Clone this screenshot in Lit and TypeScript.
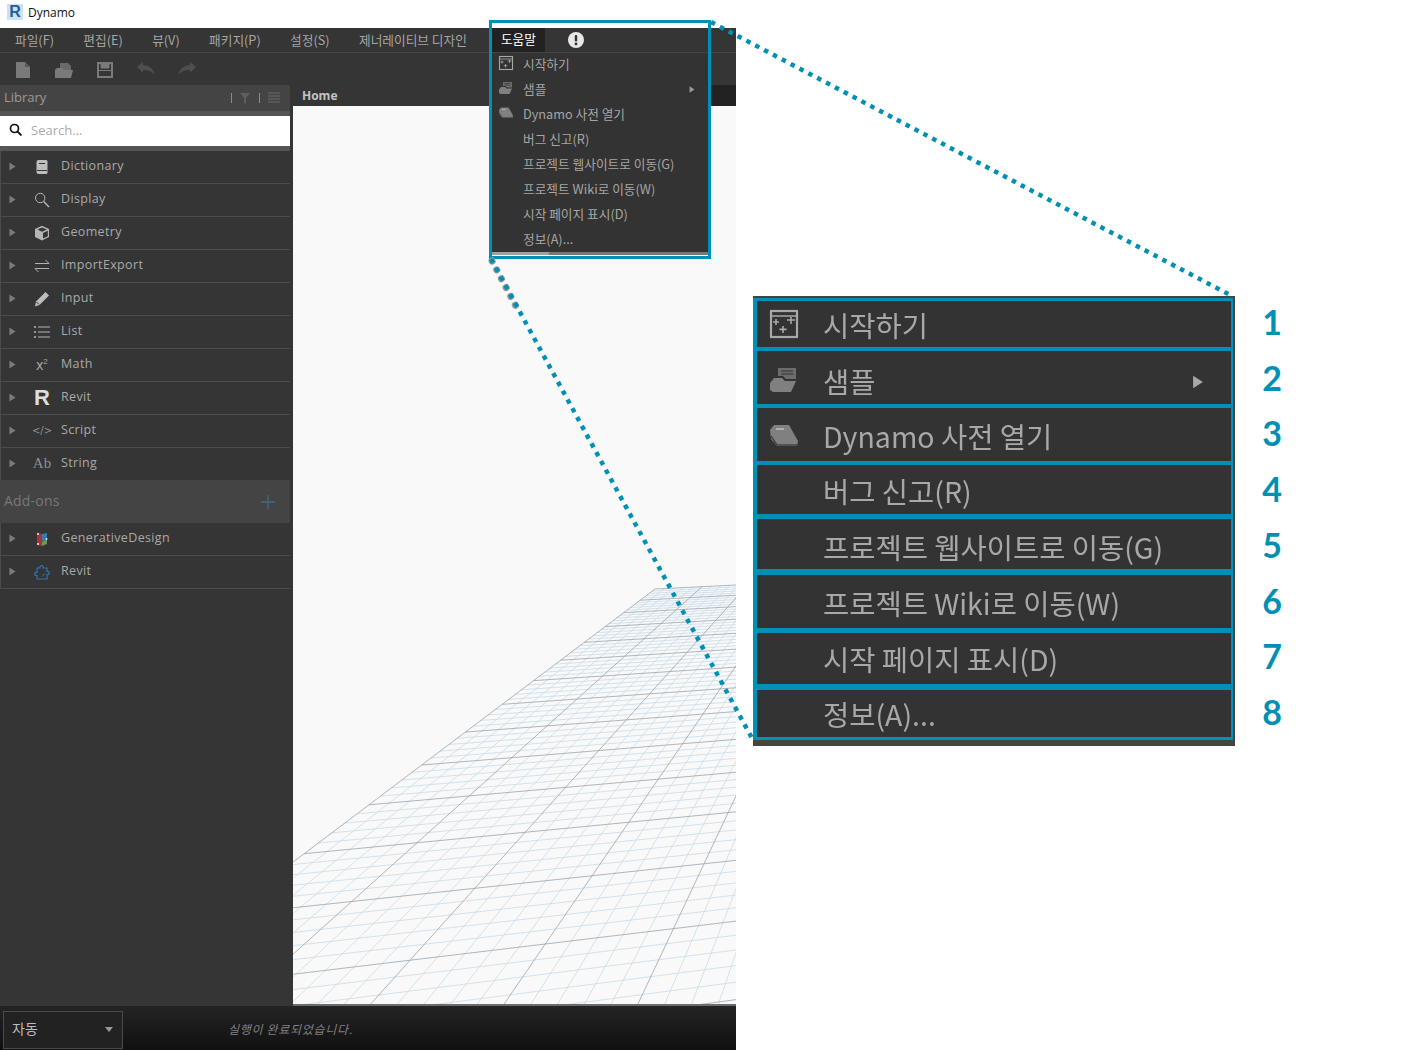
import { LitElement, html, css, svg, unsafeCSS } from 'lit';
import { customElement } from 'lit/decorators.js';

const TEAL = unsafeCSS('#0090b5');

const kr = ['시작하기', '샘플', 'Dynamo 사전 열기', '버그 신고(R)', '프로젝트 웹사이트로 이동(G)', '프로젝트 Wiki로 이동(W)', '시작 페이지 표시(D)', '정보(A)...'];

// callout rows: inner height, bottom rule, text nudge, read off the reference
const calloutRows = [
  [46, 4, 0], [53, 4, 5], [53, 4, 2], [49, 5, 2], [50, 6, 4], [53, 5, 2], [51, 6, 0], [47, 3, 0]
];

const startIcon = svg`<rect x="1.5" y="1.5" width="13" height="13" fill="none" stroke="currentColor" stroke-width="1.1"/><path d="M1.5 4h13M2.500 7h3M4 5.500v3M9.500 6h4M11.500 4.500v3.500M7.500 9v3.500M5.700 10.700h3.600" fill="none" stroke="currentColor" stroke-width=".8"/>`;
const sampleIcon = svg`<path d="M5 2h9v5.500H9L7.500 6H5z" fill="currentColor" opacity=".75"/><path d="M6.500 3.500h6M6.500 5h6" stroke="#333" stroke-width=".6"/><path d="M1 9.500 3 7h4l1.500 1.500H14L11.500 14H2.500L1 13z" fill="currentColor"/>`;
const bookIcon = svg`<path d="M1 5 3 2.500h7.500L15 10.500 14.500 13H4.500L1.500 9.500z" fill="currentColor"/><path d="M4 4.500h4" stroke="#bbb" stroke-width=".8"/><path d="M1.500 8 4.500 12.500H14.500" stroke="#444" stroke-width=".7" fill="none"/>`;
const menuIcons = [startIcon, sampleIcon, bookIcon];

const arrowRight = html`<svg class="tri" viewBox="0 0 8 10"><path d="M.5.5 7.500 5 .5 9.500z" fill="currentColor"/></svg>`;

const libIcons: Record<string, unknown> = {
  Dictionary: html`<svg class="li" viewBox="0 0 16 16"><path d="M2.500 3q0-2 2-2h7.500q1.500 0 1.500 1.500v11q0 1.500-1.500 1.500H4.500q-2 0-2-2z" fill="#bdbdbd"/><path d="M5 4.500h6M3 11.500H13" stroke="#353535" stroke-width="1.200"/></svg>`,
  Display: html`<svg class="li" viewBox="0 0 16 16"><circle cx="6.200" cy="6" r="4.700" fill="none" stroke="#b5b5b5" stroke-width="1"/><path d="M9.700 9.500 15 15" stroke="#b5b5b5" stroke-width="1.500"/></svg>`,
  Geometry: html`<svg class="li" viewBox="0 0 16 16"><path d="M8 .8 15 4v8l-7 3.500L1 12V4z" fill="#b5b5b5"/><path d="M8 2.400 12.800 4.500 8 6.700 3.500 4.600zM9 8 13.800 5.700V11.300L9 13.500z" fill="#353535"/></svg>`,
  ImportExport: html`<svg class="li" viewBox="0 0 16 16"><path d="M1 5.500H15M11.500 2 15 5.500M15 10.500H1M4.500 14 1 10.500" fill="none" stroke="#b0b0b0" stroke-width="1"/></svg>`,
  Input: html`<svg class="li" viewBox="0 0 16 16"><path d="M11.500 1 15 4.500 5.500 14 1 15.500 2 10.500z" fill="#bdbdbd"/><path d="M2.500 11 5 13.500" stroke="#353535"/></svg>`,
  List: html`<svg class="li" viewBox="0 0 16 16"><path d="M4 3h12M4 8h12M4 13h12" stroke="#b5b5b5" stroke-width="1.200"/><path d="M0 3h2M0 8h2M0 13h2" stroke="#b5b5b5" stroke-width="1.400"/></svg>`,
  Math: html`<span class="gl math">x<sup>2</sup></span>`,
  Revit: html`<span class="gl rev">R</span>`,
  Script: html`<span class="gl scr">&lt;/&gt;</span>`,
  String: html`<span class="gl ab">Ab</span>`,
  GenerativeDesign: html`<svg class="li" viewBox="0 0 16 16"><path d="M3 1.500 8 3v12L3 14z" fill="#b03037"/><path d="M8 3l5-1v6l-5 3z" fill="#2e7fb5"/><path d="M8 11l5-3v5l-5 2z" fill="#6a9a4a"/><circle cx="4" cy="3" r="1" fill="#eee"/><circle cx="4" cy="13" r="1" fill="#eee"/><circle cx="12.500" cy="8" r="1" fill="#dde"/></svg>`,
  RevitAddon: html`<svg class="li" viewBox="0 0 16 16"><path d="M3 4h3V2.500q2-2 3 0V4h4v3.500h1.500q1.500 1.500 0 3H13V15H3v-3.500H1.500q-1.500-1.500 0-3H3z" fill="none" stroke="#2b78bd" stroke-width="1.100"/><path d="M8 12.500 11 9.500" stroke="#2b78bd"/></svg>`
};

const core = ['Dictionary', 'Display', 'Geometry', 'ImportExport', 'Input', 'List', 'Math', 'Revit', 'Script', 'String'];

// floor grid: plane projected from the two vanishing points of the reference
function project(u: number, v: number) {
  const a = 0.0098 * u;
  const b = -0.0508 * v;
  const w = 1 + a + b;
  return [(655 + a * 5500 + b * 932) / w - 293, (589 + a * 350 + b * 380) / w - 106];
}

function gridLines() {
  const out: { p: number[]; q: number[]; major: boolean }[] = [];
  const vMax = 18.4;
  for (let i = 0; i <= 50; i++) {
    const u = i / 5;
    out.push({ p: project(u, 0), q: project(u, vMax), major: i % 5 === 0 });
  }
  for (let j = 0; j <= 92; j++) {
    const v = j / 5;
    out.push({ p: project(0, v), q: project(10, v), major: j % 5 === 0 });
  }
  // light lines go under the dark ones
  return out.sort((x, y) => Number(x.major) - Number(y.major));
}

@customElement('app-root')
export class AppRoot extends LitElement {
  static styles = css`
    :host {
      display: block;
      position: relative;
      width: 1402px;
      height: 1050px;
      overflow: hidden;
      background: #fff;
      font-family: "Open Sans", "Noto Sans CJK KR", sans-serif;
    }
    .app {
      width: 736px;
      height: 1050px;
      display: flex;
      flex-direction: column;
      background: #353535;
    }
    .title {
      height: 28px;
      flex: none;
      background: #fff;
      display: flex;
      align-items: center;
      gap: 5px;
      padding: 0 0 4px 7px;
      box-sizing: border-box;
      font: 12px "Open Sans", sans-serif;
      color: #111;
    }
    .logo {
      width: 16px;
      height: 16px;
      background: #cfe0ef;
      color: #1c5f9f;
      font: bold 16px/16px "Liberation Sans", sans-serif;
      text-align: center;
    }
    .menubar {
      height: 24px;
      flex: none;
      display: flex;
      align-items: center;
      gap: 29.4px;
      padding-left: 15px;
      border-bottom: 1px solid #454545;
      font: 12.7px "Noto Sans CJK KR", sans-serif;
      color: #a5a5a5;
    }
    .menubar > span {
      padding-bottom: 2px;
    }
    .menubar .on {
      background: #222;
      color: #fff;
      height: 24px;
      line-height: 22px;
      box-sizing: border-box;
      padding: 0 9px 2px;
      margin-left: -4.4px;
      margin-right: -5.9px;
    }
    .alert {
      width: 16px;
      height: 16px;
    }
    .toolbar {
      height: 32px;
      flex: none;
      display: flex;
      align-items: center;
      gap: 23px;
      padding: 2px 0 0 14px;
      box-sizing: border-box;
    }
    .toolbar svg {
      width: 18px;
      height: 18px;
    }
    .body {
      flex: 1;
      display: flex;
      min-height: 0;
    }
    .lib {
      width: 293px;
      flex: none;
      box-sizing: border-box;
      padding-right: 3px;
      color: #a9a9a9;
    }
    .lib-head {
      height: 26px;
      box-sizing: border-box;
      background: #444;
      display: flex;
      align-items: center;
      padding: 0 4px 2px 4px;
      font-size: 13px;
      color: #9a9a9a;
    }
    .lib-head span {
      flex: 1;
    }
    .lib-head svg {
      width: 56px;
      height: 14px;
      margin-top: 2px;
    }
    .search {
      height: 30px;
      box-sizing: border-box;
      margin: 5px 0;
      background: #fff;
      display: flex;
      align-items: center;
      gap: 9px;
      padding: 0 0 3px 9px;
      font-size: 13px;
      color: #aaa;
      box-shadow: 0 -5px 0 #555, 0 5px 0 #555;
    }
    .search svg {
      width: 13px;
      height: 13px;
    }
    .row {
      height: 33px;
      box-sizing: border-box;
      display: flex;
      align-items: center;
      border-bottom: 1px solid #4c4c4c;
      border-left: 1px solid #4a4a4a;
      padding: 0 0 3px 8px;
      font-size: 12.5px;
      letter-spacing: 0.35px;
    }
    .row .tri {
      width: 7px;
      height: 9px;
      color: #7b7b7b;
      margin: 2px 17px 0 0;
    }
    .ic {
      width: 18px;
      height: 18px;
      margin: 2px 10px 0 0;
      display: flex;
      align-items: center;
      justify-content: center;
      white-space: nowrap;
    }
    .li {
      width: 16px;
      height: 16px;
    }
    .gl {
      color: #909090;
      letter-spacing: 0;
    }
    .math {
      font: 14px "Liberation Sans", sans-serif;
      color: #aaa;
    }
    .math sup {
      font-size: 8px;
    }
    .rev {
      font: bold 22px "Liberation Sans", sans-serif;
      color: #ddd;
    }
    .scr {
      font: 10px "DejaVu Sans", sans-serif;
    }
    .ab {
      font: 15px "Liberation Serif", serif;
    }
    .addons {
      height: 43px;
      box-sizing: border-box;
      margin-top: -1px;
      position: relative;
      background: #444;
      display: flex;
      align-items: center;
      justify-content: space-between;
      padding: 0 15px 2px 4px;
      font-size: 14px;
      color: #777;
      letter-spacing: 0.2px;
    }
    .addons svg {
      width: 14px;
      height: 14px;
      margin-top: 2px;
    }
    .main {
      flex: 1;
      display: flex;
      flex-direction: column;
      min-width: 0;
    }
    .tabs {
      height: 21px;
      flex: none;
      display: flex;
      background: #222;
    }
    .tab {
      flex: 1;
      max-width: 400px;
      box-sizing: border-box;
      background: #353535;
      padding-left: 9px;
      font: bold 12px/21px "Open Sans", sans-serif;
      color: #c4c4c4;
    }
    .canvas {
      flex: 1;
      background: #f9f9f9;
      border-bottom: 2px solid #6c6c6c;
      min-height: 0;
    }
    .canvas svg {
      display: block;
      width: 443px;
      height: 898px;
    }
    .status {
      height: 44px;
      flex: none;
      display: flex;
      align-items: center;
      background: linear-gradient(#242424, #101010);
      padding-left: 3px;
      font-family: "Noto Sans CJK KR", sans-serif;
    }
    .combo {
      width: 120px;
      height: 38px;
      margin-top: 3px;
      box-sizing: border-box;
      border: 1px solid #4a4a4a;
      display: flex;
      align-items: center;
      justify-content: space-between;
      padding: 0 9px 3px 8px;
      font-size: 14px;
      color: #bbb;
      background: #222;
    }
    .combo i {
      border: 4px solid transparent;
      border-top: 5px solid #999;
      border-bottom: 0;
      margin-top: 3px;
    }
    .msg {
      margin-left: 105px;
      font-size: 12px;
      font-style: italic;
      letter-spacing: 0.7px;
      color: #808080;
    }
    .menu {
      position: absolute;
      left: 491px;
      top: 52px;
      width: 217px;
      height: 203px;
      box-sizing: border-box;
      background: #333;
      border-top: 1px solid #454545;
      border-bottom: 3px solid #777;
      font: 12.7px "Noto Sans CJK KR", sans-serif;
      color: #a5a5a5;
    }
    .menu::after {
      content: "";
      position: absolute;
      left: 0;
      bottom: -3px;
      width: 58px;
      height: 3px;
      background: #a0a0a0;
    }
    .mi {
      height: 25px;
      box-sizing: border-box;
      display: flex;
      align-items: center;
      padding: 0 0 5px 7px;
    }
    .mi .mic {
      width: 16px;
      height: 16px;
      margin-right: 9px;
      flex: none;
      color: #808080;
    }
    .mi:first-child .mic,
    .cr:first-child .mic {
      color: #a8a8a8;
    }
    .mi .tri {
      width: 6px;
      height: 7px;
      margin: 3px 13px 0 auto;
      color: #999;
    }
    .hilite {
      position: absolute;
      left: 489px;
      top: 20px;
      width: 222px;
      height: 239px;
      box-sizing: border-box;
      border: 3px solid ${TEAL};
      pointer-events: none;
    }
    .callout {
      position: absolute;
      left: 753px;
      top: 296px;
      width: 482px;
      height: 450px;
      box-sizing: border-box;
      background: #333;
      border-top: 2px solid #444;
      border-bottom: 6px solid #444;
      border-right: 2px solid #444;
    }
    .box {
      box-sizing: border-box;
      border-top: 3px solid ${TEAL};
      border-left: 4px solid ${TEAL};
      border-right: 2px solid ${TEAL};
    }
    .cr {
      box-sizing: border-box;
      display: flex;
      align-items: center;
      padding-left: 11px;
      border-bottom: solid ${TEAL};
      font: 28.5px "Noto Sans CJK KR", sans-serif;
      color: #a8a8a8;
    }
    .cr > * {
      filter: blur(0.6px);
    }
    .cr .mic {
      width: 32px;
      height: 32px;
      margin-right: 23px;
      flex: none;
      color: #808080;
    }
    .cr .tri {
      width: 14px;
      height: 14px;
      margin: 3px 26px 0 auto;
      color: #a8a8a8;
    }
    .nums {
      position: absolute;
      left: 1253px;
      top: 294px;
      display: flex;
      flex-direction: column;
      width: 38px;
      font: bold 34px/55.7px Lato, sans-serif;
      color: ${TEAL};
      text-align: center;
    }
    .leaders {
      position: absolute;
      left: 0;
      top: 0;
      width: 1402px;
      height: 1050px;
      pointer-events: none;
    }
  `;

  private row(name: string, key = name) {
    return html`<div class="row">${arrowRight}<span class="ic">${libIcons[key]}</span>${name}</div>`;
  }

  render() {
    return html`
      <div class="app">
        <div class="title"><span class="logo">R</span>Dynamo</div>
        <div class="menubar">
          <span>파일(F)</span><span>편집(E)</span><span>뷰(V)</span><span>패키지(P)</span><span>설정(S)</span><span>제너레이티브 디자인</span>
          <span class="on">도움말</span>
          <svg class="alert" viewBox="0 0 16 16"><circle cx="8" cy="8" r="8" fill="#e8e8e8"/><rect x="6.800" y="3" width="2.400" height="6.500" rx="1" fill="#333"/><circle cx="8" cy="12" r="1.400" fill="#333"/></svg>
        </div>
        <div class="toolbar">
          <svg viewBox="0 0 18 18"><path d="M2 1h9l5 5v11H2z" fill="#7a7a7a"/><path d="M11 1l5 5h-5z" fill="#5a5a5a"/></svg>
          <svg viewBox="0 0 18 18"><path d="M5 2h8l3 3v5H5z" fill="#6a6a6a"/><path d="M0 9l2-2h5l2 2h9l-2 8H0z" fill="#7a7a7a"/></svg>
          <svg viewBox="0 0 18 18"><path d="M2 2h14v14H2z" fill="none" stroke="#7a7a7a" stroke-width="2"/><path d="M5 2h8v5H5zM2 9.500h14" fill="#7a7a7a" stroke="#7a7a7a"/><path d="M5 12h8v3H5z" fill="#353535"/></svg>
          <svg viewBox="0 0 18 18"><path d="M0 6 6 1v3q9 0 12 10-4-5-12-5v3z" fill="#4e4e4e"/></svg>
          <svg viewBox="0 0 18 18"><path d="M18 6 12 1v3Q3 4 0 14q4-5 12-5v3z" fill="#4e4e4e"/></svg>
        </div>
        <div class="body">
          <div class="lib">
            <div class="lib-head"><span>Library</span>
              <svg viewBox="0 0 56 14"><path d="M1.500 2v10M29.500 2v10" stroke="#8a8a8a"/><path d="M10 2h10l-4 5v6l-2-1V7z" fill="#5e5e5e"/><path d="M38 2h12M38 5h12M38 8h12M38 11h12" stroke="#5e5e5e" stroke-width="1.500"/></svg>
            </div>
            <div class="search">
              <svg viewBox="0 0 13 13"><circle cx="5.500" cy="5.500" r="4" fill="none" stroke="#111" stroke-width="1.700"/><path d="M8.500 8.500 12.500 12.500" stroke="#111" stroke-width="1.800"/></svg>
              Search...
            </div>
            ${core.map(n => this.row(n))}
            <div class="addons">Add-ons
              <svg viewBox="0 0 14 14"><path d="M7 0v14M0 7h14" stroke="#3f6b7e" stroke-width="1.300"/></svg>
            </div>
            ${this.row('GenerativeDesign')}
            ${this.row('Revit', 'RevitAddon')}
          </div>
          <div class="main">
            <div class="tabs"><div class="tab">Home</div></div>
            <div class="canvas">
              <svg viewBox="0 0 443 898">
                ${gridLines().map(l => svg`<line x1=${l.p[0]} y1=${l.p[1]} x2=${l.q[0]} y2=${l.q[1]}
                  stroke=${l.major ? '#9aa4ac' : '#c8dcea'} stroke-width="0.8"/>`)}
              </svg>
            </div>
          </div>
        </div>
        <div class="status">
          <div class="combo">자동<i></i></div>
          <div class="msg">실행이 완료되었습니다.</div>
        </div>
      </div>

      <div class="menu">
        ${kr.map((t, i) => html`<div class="mi">
          <svg class="mic" viewBox="0 0 16 16">${menuIcons[i] ?? ''}</svg>${t}${i === 1 ? arrowRight : ''}
        </div>`)}
      </div>
      <div class="hilite"></div>

      <div class="callout"><div class="box">
        ${kr.map((t, i) => html`<div class="cr" style="height:${calloutRows[i][0] + calloutRows[i][1]}px;border-bottom-width:${calloutRows[i][1]}px;padding-top:${calloutRows[i][2]}px">
          <svg class="mic" viewBox="0 0 16 16">${menuIcons[i] ?? ''}</svg><span>${t}</span>${i === 1 ? arrowRight : ''}
        </div>`)}
      </div></div>
      <div class="nums">${[1, 2, 3, 4, 5, 6, 7, 8].map(n => html`<span>${n}</span>`)}</div>

      <svg class="leaders" viewBox="0 0 1402 1050">
        <path d="M491 259 520 314" fill="none" stroke="#9a9a9a" stroke-width="7" stroke-linecap="round" stroke-dasharray="0.1 9.900" stroke-dashoffset="-2.250"/>
        <path d="M711 22 1232 296M491 259 753 740" fill="none" stroke="#0090b5" stroke-width="4.500" stroke-dasharray="4.500 5.500"/>
      </svg>
    `;
  }
}
